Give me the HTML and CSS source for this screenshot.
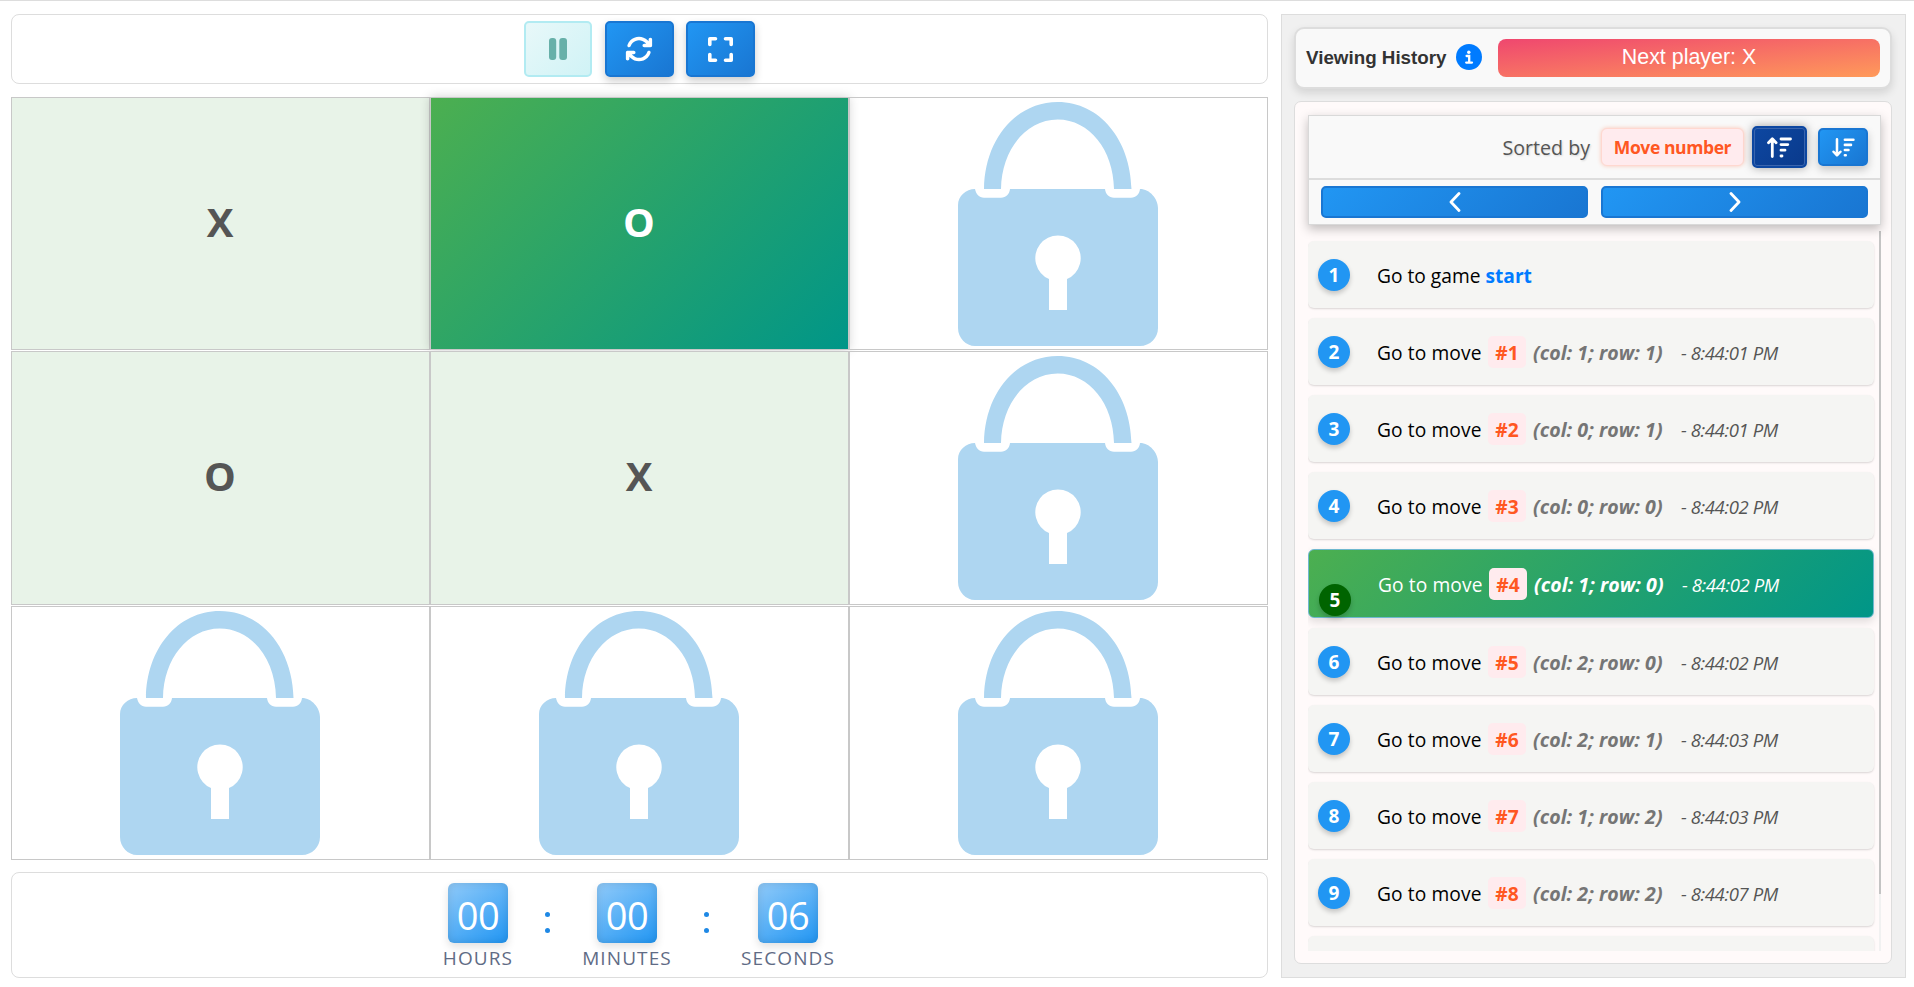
FILE: index.html
```html
<!DOCTYPE html>
<html lang="en">
<head>
<meta charset="utf-8">
<title>Tic Tac Toe</title>
<link rel="stylesheet" href="styles.css">
</head>
<body>
<svg class="defs" aria-hidden="true">
  <symbol id="lock" viewBox="0 0 200 244">
    <path d="M26 87C26.500 38 57.500 0 99.700 0S172.500 38 173.500 87H156C155.500 48 131.500 17.500 99.700 17.500S43.500 48 43 87Z"/>
    <path fill-rule="evenodd" d="M17 87C18 92 21 95.700 26 95.700H43C48 95.700 51.500 92 52 87H147C147.500 92 151 95.700 156 95.700H173C178 95.700 181.500 92 182 87C192 87 200 97 200 106V226C200 236 192 244 182 244H17C8 244 0 236 0 226V103C0 94 8 87 17 87ZM91 177V208H109V177A22.700 22.700 0 1 0 91 177Z"/>
  </symbol>
</svg>
<div class="app">
  <main class="game">
    <div class="toolbar">
      <button class="btn btn-tool btn-disabled" aria-label="Pause"><svg width="18" height="22" viewBox="0 0 18 22"><rect x="0" y="0" width="7.200" height="22" rx="3"/><rect x="10.300" y="0" width="7.700" height="22" rx="3"/></svg></button>
      <button class="btn btn-tool" aria-label="Restart"><svg width="28" height="28" viewBox="0 0 512 512"><path d="M105.100 202.600c7.700-21.800 20.200-42.300 37.800-59.800c62.500-62.500 163.800-62.500 226.300 0L386.300 160 352 160c-17.700 0-32 14.300-32 32s14.300 32 32 32l111.500 0c0 0 0 0 0 0l.4 0c17.700 0 32-14.300 32-32l0-112c0-17.700-14.300-32-32-32s-32 14.300-32 32l0 35.200L414.400 97.600c-87.500-87.500-229.300-87.500-316.800 0C73.200 122 55.600 150.700 44.800 181.400c-5.900 16.700 2.900 34.900 19.500 40.800s34.900-2.900 40.800-19.500zM39 289.300c-5 1.500-9.800 4.200-13.700 8.200c-4 4-6.700 8.800-8.100 14c-.3 1.200-.6 2.500-.8 3.800c-.3 1.700-.4 3.400-.4 5.100L16 432c0 17.700 14.300 32 32 32s32-14.300 32-32l0-35.100 17.600 17.500c87.500 87.400 229.300 87.400 316.700 0c24.400-24.400 42.100-53.100 52.900-83.800c5.900-16.700-2.900-34.900-19.500-40.800s-34.900 2.900-40.800 19.500c-7.700 21.800-20.200 42.300-37.800 59.800c-62.500 62.500-163.800 62.500-226.300 0l-.1-.1L125.600 352l34.400 0c17.700 0 32-14.300 32-32s-14.300-32-32-32L48.400 288c-1.600 0-3.200 .1-4.800 .3s-3.100 .5-4.600 1z"/><path d="M485 58V208H350ZM27 454V304H160Z"/></svg></button>
      <button class="btn btn-tool" aria-label="Fullscreen"><svg width="25" height="25" viewBox="0 0 25 25" fill="none" stroke="#fff" stroke-width="3.600" stroke-linecap="round" stroke-linejoin="round"><path d="M1.800 7.500V1.800H7.500M17.500 1.800H23.200V7.500M1.800 17.500V23.200H7.500M17.500 23.200H23.200V17.500"/></svg></button>
    </div>
    <div class="board">
      <div class="cell cell-played">X</div>
      <div class="cell cell-current">O</div>
      <div class="cell"><svg class="lock"><use href="#lock"/></svg></div>
      <div class="cell cell-played">O</div>
      <div class="cell cell-played">X</div>
      <div class="cell"><svg class="lock"><use href="#lock"/></svg></div>
      <div class="cell"><svg class="lock"><use href="#lock"/></svg></div>
      <div class="cell"><svg class="lock"><use href="#lock"/></svg></div>
      <div class="cell"><svg class="lock"><use href="#lock"/></svg></div>
    </div>
    <div class="timer">
      <div class="unit unit-hours"><div class="digits">00</div><div class="label">HOURS</div></div>
      <div class="colon"><i></i><i></i></div>
      <div class="unit unit-minutes"><div class="digits">00</div><div class="label">MINUTES</div></div>
      <div class="colon"><i></i><i></i></div>
      <div class="unit unit-seconds"><div class="digits">06</div><div class="label">SECONDS</div></div>
    </div>
  </main>
  <aside class="sidebar">
    <div class="status">
      <span class="status-title">Viewing History</span>
      <svg class="info" viewBox="0 0 26 26"><circle cx="13" cy="13" r="13" fill="#007bff"/><circle cx="12.800" cy="8.300" r="1.700" fill="#fff"/><path d="M10.600 12H13.200V18.500M10.200 18.600H16" fill="none" stroke="#fff" stroke-width="2.300" stroke-linecap="round"/></svg>
      <div class="next-player">Next player: X</div>
    </div>
    <section class="history">
      <header class="history-head">
        <div class="sort">
          <span class="sort-label">Sorted by</span>
          <span class="sort-key">Move number</span>
          <button class="btn btn-sort btn-active" aria-label="Ascending"><svg width="25" height="21" viewBox="0 0 25 21" fill="none" stroke="#fff" stroke-width="2.800" stroke-linecap="round" stroke-linejoin="round"><path d="M5.300 19.500V2M1.500 5.800L5.300 1.800L9.100 5.800M14 2H23.500M14 7.600H20.800M14 13.200H18M14 19H15"/></svg></button>
          <button class="btn btn-sort" aria-label="Descending"><svg width="23" height="19" viewBox="0 0 25 21" fill="none" stroke="#fff" stroke-width="2.800" stroke-linecap="round" stroke-linejoin="round"><path d="M5.300 1.500V19M1.500 15.200L5.300 19.200L9.100 15.200M14 2H23.500M14 7.600H20.800M14 13.200H18M14 19H15"/></svg></button>
        </div>
        <div class="pager">
          <button class="btn btn-page" aria-label="Previous"><svg width="12" height="20" viewBox="0 0 12 20"><path d="M10 1.500L2 10L10 18.500"/></svg></button>
          <button class="btn btn-page" aria-label="Next"><svg width="12" height="20" viewBox="0 0 12 20"><path d="M2 1.500L10 10L2 18.500"/></svg></button>
        </div>
      </header>
      <div class="scroller">
        <ol class="moves">
          <li class="move"><span class="num">1</span><span class="go-start">Go to game <b>start</b></span></li>
          <li class="move"><span class="num">2</span><span class="go">Go to move</span><span class="tag">#1</span><span class="pos">(col: 1; row: 1)</span><span class="time">- 8:44:01 PM</span></li>
          <li class="move"><span class="num">3</span><span class="go">Go to move</span><span class="tag">#2</span><span class="pos">(col: 0; row: 1)</span><span class="time">- 8:44:01 PM</span></li>
          <li class="move"><span class="num">4</span><span class="go">Go to move</span><span class="tag">#3</span><span class="pos">(col: 0; row: 0)</span><span class="time">- 8:44:02 PM</span></li>
          <li class="move move-current"><span class="num">5</span><span class="go">Go to move</span><span class="tag">#4</span><span class="pos">(col: 1; row: 0)</span><span class="time">- 8:44:02 PM</span></li>
          <li class="move"><span class="num">6</span><span class="go">Go to move</span><span class="tag">#5</span><span class="pos">(col: 2; row: 0)</span><span class="time">- 8:44:02 PM</span></li>
          <li class="move"><span class="num">7</span><span class="go">Go to move</span><span class="tag">#6</span><span class="pos">(col: 2; row: 1)</span><span class="time">- 8:44:03 PM</span></li>
          <li class="move"><span class="num">8</span><span class="go">Go to move</span><span class="tag">#7</span><span class="pos">(col: 1; row: 2)</span><span class="time">- 8:44:03 PM</span></li>
          <li class="move"><span class="num">9</span><span class="go">Go to move</span><span class="tag">#8</span><span class="pos">(col: 2; row: 2)</span><span class="time">- 8:44:07 PM</span></li>
          <li class="move"></li>
        </ol>
        <div class="track"><div class="thumb"></div></div>
      </div>
    </section>
  </aside>
</div>
</body>
</html>
```
FILE: styles.css
```css
* { box-sizing: border-box; }
body { margin: 0; background: #fff; font-family: "Open Sans", "Noto Sans", sans-serif; overflow: hidden; }
.defs { display: none; }
.app { display: flex; gap: 13px; height: 987px; padding: 13px 8px 9px 11px; border-top: 1px solid #ddd; }

.game { width: 1257px; display: flex; flex-direction: column; }
.toolbar { height: 70px; border: 1px solid #ddd; border-radius: 8px; display: flex; justify-content: center; padding-top: 6px; gap: 12px; padding-right: 1px; }
.btn { display: flex; align-items: center; justify-content: center; padding: 0; color: #fff; border: 2px solid #1976d2; border-radius: 5px; background: linear-gradient(135deg, #2196f3, #1976d2); }
.btn svg { fill: currentColor; }
.btn-tool { width: 69px; height: 56px; box-shadow: 0 4px 8px rgba(0,0,0,.2); }
.btn-tool svg[fill="none"], .btn-sort svg { fill: none; }
.btn-disabled { width: 68px; color: #67b0a9; border-color: #b2ebf2; background: linear-gradient(135deg, #e8f8f9, #d0f3f6); box-shadow: none; margin-right: 1px; }

.board { margin-top: 13px; display: grid; grid-template-columns: repeat(3, 419px); grid-template-rows: 253px 254px 254px; row-gap: 1px; }
.cell { position: relative; border: 1px solid #c8c8c8; display: flex; align-items: center; justify-content: center; font-size: 40px; font-weight: 700; line-height: 1; color: #555; }
.cell-played, .cell-current { padding: 0 1px 4px 0; }
.cell-played { background: #e8f3e8; }
.cell-current { color: #fff; background: linear-gradient(135deg, #4caf50, #009688); box-shadow: 0 0 10px rgba(0,0,0,.18); }
.lock { width: 200px; height: 244px; margin-right: 1px; fill: #aed6f1; }

.timer { height: 106px; margin-top: 12px; border: 1px solid #ddd; border-radius: 8px; display: flex; padding: 10px 0 0 431px; }
.unit { display: flex; flex-direction: column; align-items: center; }
.unit-hours { width: 70px; }
.unit-minutes { width: 90px; margin-left: 31px; }
.unit-seconds { width: 94px; margin-left: 31px; }
.digits { width: 60px; height: 60px; border-radius: 6px; color: #fff; font-size: 38px; line-height: 64px; text-align: center; letter-spacing: -.6px; background: linear-gradient(145deg, #90caf9, #2196f3); box-shadow: 0 4px 8px rgba(0,0,0,.12), inset 0 0 8px rgba(0,0,0,.12); }
.label { font-size: 19px; line-height: 24px; margin-top: 3px; color: #5f6b85; letter-spacing: 1.100px; white-space: nowrap; }
.colon { width: 6px; margin-left: 32px; padding-top: 29px; display: flex; flex-direction: column; gap: 11px; }
.colon i { width: 5px; height: 5px; border-radius: 50%; background: #1e88e5; }

.sidebar { width: 625px; border: 1px solid #ddd; background: #f0f0f0; padding: 12px 13px 13px 12px; display: flex; flex-direction: column; gap: 13px; }
.status { height: 62px; margin-bottom: -1px; border: 2px solid #ddd; border-radius: 10px; background: #f9f9f9; box-shadow: 0 4px 8px rgba(0,0,0,.12); display: flex; align-items: center; padding: 0 10px; font-family: "Liberation Sans", Arial, sans-serif; }
.status-title { width: 150px; font-size: 18.800px; font-weight: 700; color: #333; white-space: nowrap; }
.info { width: 26px; height: 26px; margin-top: -3px; }
.next-player { flex: 1; height: 38px; margin-left: 16px; margin-top: -1px; border-radius: 8px; background: linear-gradient(to bottom right, #ef476f, #ff9a5a); color: #fff; font-size: 21.400px; line-height: 36px; text-align: center; }
.history { flex: 1; min-height: 0; border: 1px solid #ddd; border-radius: 7px; background: #fffafa; padding: 13px 10px 13px 13px; }
.history-head { position: relative; width: 573px; height: 110px; border: 1px solid #d9d9d9; background: #f9f9f9; box-shadow: 0 4px 10px rgba(0,0,0,.25); }
.sort { height: 64px; border-bottom: 2px solid #ddd; display: flex; align-items: center; justify-content: flex-end; padding-right: 12px; }
.sort-label { font-size: 19.600px; font-weight: 500; color: #555; margin-right: 11px; text-shadow: 1px 1px 2px rgba(0,0,0,.15); }
.sort-key { width: 143px; height: 38px; border: 1px solid #ffd8d0; border-radius: 6px; background: #ffebee; box-shadow: 0 0 4px rgba(255,87,34,.3); color: #ff5722; font-weight: 700; font-size: 17.500px; letter-spacing: -.4px; line-height: 36px; text-align: center; white-space: nowrap; margin-right: 8px; }
.btn-sort { width: 50px; height: 38px; box-shadow: 0 4px 8px rgba(0,0,0,.2); }
.btn-active { width: 55px; height: 42px; border-color: #0d47a1; background: linear-gradient(135deg, #0d47a1, #0a3a8c); box-shadow: inset 0 0 0 1px #3b65ad, 0 0 10px rgba(0,0,0,.35); margin-right: 11px; }
.pager { display: flex; gap: 13px; padding: 6px 12px; }
.btn-page { flex: 1; height: 32px; }
.btn-page svg { fill: none; stroke: #fff; stroke-width: 2.800; stroke-linecap: round; stroke-linejoin: round; }

.scroller { height: 720px; margin-top: 6px; display: flex; gap: 5px; overflow: hidden; }
.moves { width: 566px; margin: 0; padding: 10px 0 0; list-style: none; }
.move { height: 67px; margin-bottom: 10px; padding-left: 10px; border-radius: 6px; background: #f5f5f3; box-shadow: 0 1px 2px rgba(0,0,0,.15); display: flex; align-items: center; font-size: 19.200px; white-space: nowrap; color: #000; }
.num { width: 32px; height: 32px; margin-right: 27px; border-radius: 50%; background: #2196f3; box-shadow: 0 3px 5px rgba(0,0,0,.2); color: #fff; font-weight: 700; font-size: 19px; line-height: 33px; text-align: center; }
.go { width: 111px; letter-spacing: .1px; line-height: 32px; padding-top: 2px; }
.go-start { letter-spacing: 0; padding-top: 1px; }
.go-start b { color: #007bff; }
.tag { width: 38px; height: 32px; border-radius: 5px; background: #ffebee; color: #ff5722; font-weight: 700; font-size: 19.200px; line-height: 34px; text-align: center; margin-right: 7px; }
.pos { width: 148px; font-style: italic; font-weight: 700; font-size: 19.600px; color: #757575; letter-spacing: .05px; padding-top: 1px; }
.time { font-style: italic; font-size: 18.500px; color: #555; letter-spacing: -.4px; padding-top: 1px; }
.move-current { height: 69px; border: 1px solid #6fb8cf; color: #fff; background: linear-gradient(135deg, #4caf50, #009688); box-shadow: 0 4px 8px rgba(0,0,0,.12); }
.move-current .num { background: #006400; margin-top: 33px; }
.move-current .pos, .move-current .time { color: #fff; }
.track { width: 2px; background: #f1f1f1; }
.thumb { height: 663px; background: #c4c4c4; }
```
